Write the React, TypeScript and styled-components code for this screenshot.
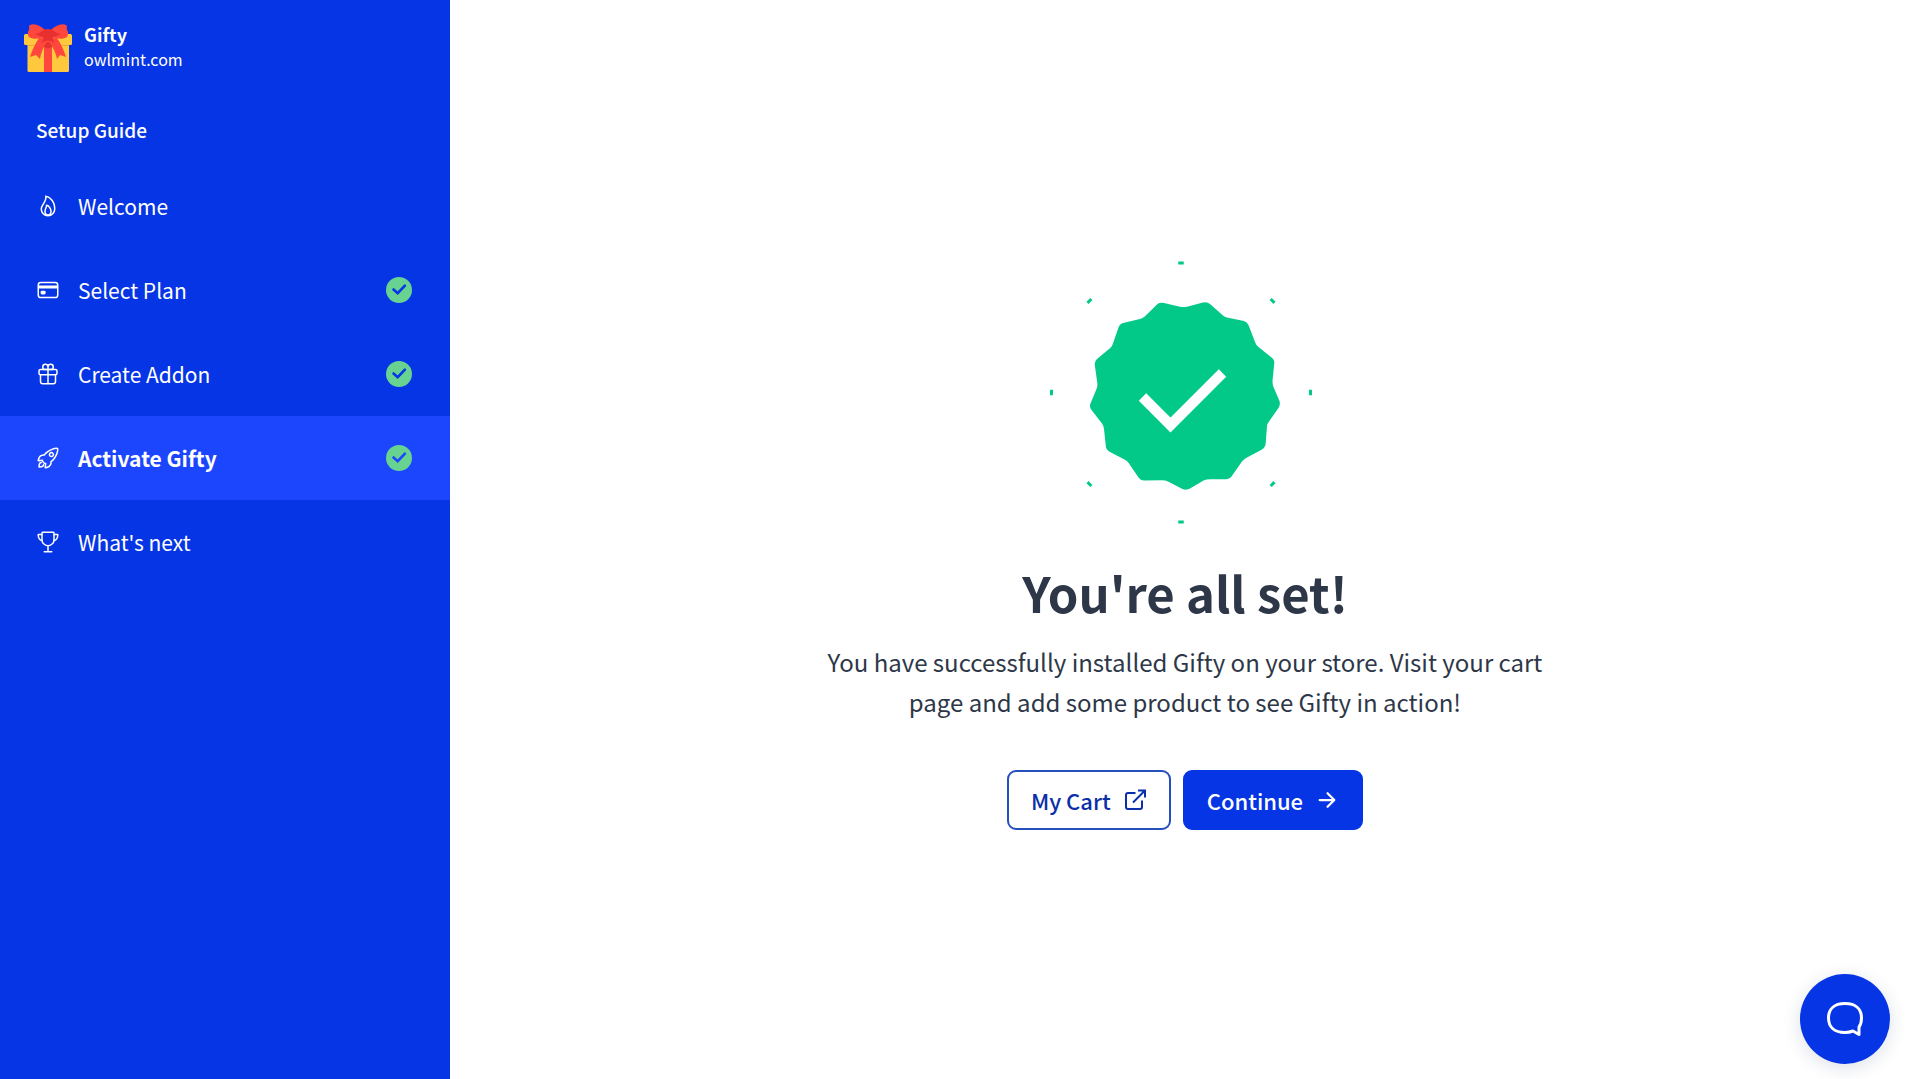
import React from "react";
import styled, { createGlobalStyle } from "styled-components";
import {
  IoFlameOutline,
  IoCardOutline,
  IoGiftOutline,
  IoRocketOutline,
  IoTrophyOutline,
  IoArrowForward,
} from "react-icons/io5";

const blue = "#0635e5";
const activeBlue = "#1c45fe";
const green = "#03c988";

const GlobalStyle = createGlobalStyle`
  *, *::before, *::after { box-sizing: border-box; }
  body {
    margin: 0;
    background: #ffffff;
    color: #2d3748;
    font-family: "Source Sans Pro", "Noto Sans CJK SC", "Noto Sans", sans-serif;
  }
`;

const Page = styled.div`
  display: flex;
  min-height: 100vh;
`;

const Sidebar = styled.aside`
  flex: 0 0 450px;
  background: ${blue};
  color: #ffffff;
`;

const Brand = styled.header`
  display: flex;
  align-items: center;
  gap: 12px;
  padding: 22px 24px 0;
`;

const BrandText = styled.div`
  padding-bottom: 2px;
`;

const BrandName = styled.div`
  font-size: 18px;
  line-height: 24px;
  font-weight: 700;
`;

const BrandSite = styled.div`
  font-size: 16px;
  line-height: 26px;
`;

const GuideTitle = styled.h2`
  margin: 0;
  padding: 42px 36px 20px;
  font-size: 19px;
  line-height: 28px;
  font-weight: 500;
`;

const Steps = styled.ul`
  list-style: none;
  margin: 0;
  padding: 0;
`;

const StepLink = styled.a<{ $active?: boolean }>`
  display: flex;
  align-items: center;
  gap: 18px;
  height: 84px;
  padding: 0 38px 0 36px;
  color: #ffffff;
  text-decoration: none;
  font-size: 21px;
  font-weight: ${(p) => (p.$active ? 700 : 400)};
  background: ${(p) => (p.$active ? activeBlue : "transparent")};
`;

const StepLabel = styled.span`
  flex: 1;
`;

const Main = styled.main`
  flex: 1;
  display: flex;
  flex-direction: column;
  align-items: center;
  justify-content: center;
  padding: 0 24px 10px;
  text-align: center;
`;

const Heading = styled.h1`
  margin: 20px 0 0;
  font-size: 49px;
  line-height: 64px;
  font-weight: 700;
`;

const Message = styled.p`
  max-width: 740px;
  margin: 18px 0 0;
  font-size: 24px;
  line-height: 40px;
`;

const Actions = styled.div`
  display: flex;
  gap: 12px;
  margin-top: 48px;
`;

const Button = styled.button<{ $primary?: boolean }>`
  display: flex;
  align-items: center;
  gap: 12px;
  height: 60px;
  padding: 0 22px;
  border: 2px solid ${(p) => (p.$primary ? blue : "#2450bd")};
  border-radius: 9px;
  background: ${(p) => (p.$primary ? blue : "#ffffff")};
  color: ${(p) => (p.$primary ? "#ffffff" : "#0a2fa8")};
  font-family: inherit;
  font-size: 22px;
  line-height: 32px;
  font-weight: 500;
  cursor: pointer;
`;

const ChatButton = styled.button`
  position: fixed;
  right: 30px;
  bottom: 15px;
  display: flex;
  align-items: center;
  justify-content: center;
  width: 90px;
  height: 90px;
  padding: 0;
  border: 0;
  border-radius: 50%;
  background: ${blue};
  box-shadow: 0 4px 18px rgba(20, 40, 90, 0.14);
  cursor: pointer;
`;

function GiftLogo() {
  return (
    <svg width="48" height="48" viewBox="0 0 48 48" aria-hidden="true">
      <path d="M3.500 18H45v28.500a1.500 1.500 0 0 1-1.500 1.500H5a1.500 1.500 0 0 1-1.500-1.500z" fill="#ffc83d" />
      <path d="M3.500 20.500H45v1.500H3.500z" fill="#e8ab2e" />
      <rect x="0" y="10" width="48" height="11" rx="1.500" fill="#ffc83d" />
      <path d="M20 14h8v34h-8z" fill="#ff473e" />
      <path d="M20 18h8v5q-4 2-8 0z" fill="#e0342c" />
      <path d="M20 13l-5 1C11 20 8 26 6 33l6-2 4 4c1-6 3-12 7-17zM28 13l5 1c4 6 7 12 9 19l-6-2-3 4c-1-6-4-12-8-17z" fill="#ff473e" />
      <path d="M21 6C16 1 10-1 6 1 4 2 6 4 5 6c-2 2-1 5 0 7 5 3 10 2 16-1zM27 6c5-5 11-7 15-5 2 1 0 3 1 5 2 2 1 5 0 7-5 3-10 2-16-1z" fill="#ff473e" />
      <path d="M11 10q5-1 9-4q4-2 8 0q4 3 9 4l-9 4 3 5q-7-5-14 0l3-5z" fill="#e8302f" />
    </svg>
  );
}

function DoneMark({ cutout }: { cutout: string }) {
  return (
    <svg width="26" height="26" viewBox="0 0 26 26" role="img" aria-label="Completed">
      <circle cx="13" cy="13" r="13" fill="#68d391" />
      <path d="M7.500 12.500l4.200 3.700 7.200-7.500" fill="none" stroke={cutout} strokeWidth="2.600" strokeLinecap="round" />
    </svg>
  );
}

function OpenIcon() {
  return (
    <svg width="24" height="24" viewBox="0 0 24 24" fill="none" stroke="currentColor" strokeWidth="2" aria-hidden="true">
      <path d="M12.500 5H5a2 2 0 0 0-2 2v12a2 2 0 0 0 2 2h12a2 2 0 0 0 2-2v-6.500" />
      <path d="M15 2.500h7v7M10 14.500l12-12" />
    </svg>
  );
}

const ticks = [0, 45, 90, 135, 180, 225, 270, 315];

function SuccessBadge() {
  return (
    <svg width="300" height="300" viewBox="5 0 300 300" role="img" aria-label="Success">
      {ticks.map((a) => (
        <rect key={a} x="148.250" y="21.500" width="5.500" height="3" fill={green} transform={`rotate(${a} 151 152.500)`} />
      ))}
      <path
        fill={green}
        d="M127.500 64Q130 62 134 63L150 66.700Q153.500 67.500 157 66.700L173 62.500Q177 61.300 180 64L193 75.500Q195 77.300 198 77.800L214 81Q217 82 218.500 85L225 102Q226 105 228.500 107L241 117Q244.500 119.500 244.300 123L242.500 141Q242.300 144 243.500 147L249.500 161Q250.500 165 248.500 168L239 181.500Q237.300 183.500 237 186L235.700 203Q235.500 207 232 209.500L217 217.500Q214 219 212 221.500L202.500 235Q200.500 239 196 239.200L181 239.200Q177 239 174 240.300L160 248.500Q156.500 250.500 152.500 249L138 241.500Q135.500 240.200 132 240.200L114 240.600Q110.500 240.500 108.500 237.500L99 223.500Q97.500 221 94.500 219.500L79.500 211.700Q76 209.500 75.800 206L74 189Q73.800 186 72 183.500L61.500 170Q59 167 60.500 163.500L66.500 149Q67.700 146 67.300 143L64.800 125Q64.300 121.500 67 119L80.500 107.700Q82 106.500 82.800 104L88.500 87.500Q89.500 84 93 83L110 79Q112.500 78.500 115 76.300Z"
      />
      <path d="M112.500 157l28 28 52-52" fill="none" stroke="#ffffff" strokeWidth="10.500" />
    </svg>
  );
}

function ChatIcon() {
  return (
    <svg width="40" height="40" viewBox="0 0 40 40" fill="none" aria-hidden="true">
      <path
        d="M20 4.500C9 4.500 3.500 10.500 3.500 19S9 33.500 20 33.500c3 0 5.500-.5 8-1.500l6 3.500v-7.500c1.800-2.500 2.500-5.500 2.500-9C36.500 10.500 31 4.500 20 4.500z"
        stroke="#ffffff"
        strokeWidth="3"
        strokeLinejoin="round"
      />
    </svg>
  );
}

const steps = [
  { label: "Welcome", Icon: IoFlameOutline },
  { label: "Select Plan", Icon: IoCardOutline, done: true },
  { label: "Create Addon", Icon: IoGiftOutline, done: true },
  { label: "Activate Gifty", Icon: IoRocketOutline, done: true, active: true },
  { label: "What's next", Icon: IoTrophyOutline },
];

export default function App() {
  return (
    <Page>
      <GlobalStyle />
      <Sidebar>
        <Brand>
          <GiftLogo />
          <BrandText>
            <BrandName>Gifty</BrandName>
            <BrandSite>owlmint.com</BrandSite>
          </BrandText>
        </Brand>
        <GuideTitle>Setup Guide</GuideTitle>
        <nav aria-label="Setup steps">
          <Steps>
            {steps.map(({ label, Icon, done, active }) => (
              <li key={label}>
                <StepLink href="#" $active={active} aria-current={active ? "step" : undefined}>
                  <Icon size={24} aria-hidden="true" />
                  <StepLabel>{label}</StepLabel>
                  {done && <DoneMark cutout={active ? activeBlue : blue} />}
                </StepLink>
              </li>
            ))}
          </Steps>
        </nav>
      </Sidebar>
      <Main>
        <SuccessBadge />
        <Heading>You're all set!</Heading>
        <Message>
          You have successfully installed Gifty on your store. Visit your cart page and add some product to see Gifty in
          action!
        </Message>
        <Actions>
          <Button type="button">
            My Cart
            <OpenIcon />
          </Button>
          <Button type="button" $primary>
            Continue
            <IoArrowForward size={24} aria-hidden="true" />
          </Button>
        </Actions>
      </Main>
      <ChatButton type="button" aria-label="Open chat">
        <ChatIcon />
      </ChatButton>
    </Page>
  );
}
